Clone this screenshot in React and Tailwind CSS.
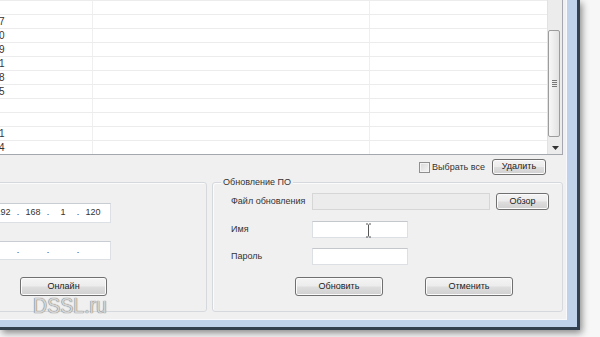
import React from "react";

const BTN =
  "flex items-center justify-center rounded-[3px] border border-[#707070] bg-[linear-gradient(#f4f4f4_0%,#ececec_48%,#dedede_52%,#d0d0d0_100%)] shadow-[inset_0_0_0_1px_#fbfbfb] text-[9px] text-[#222] whitespace-nowrap";

function Btn({ children, className }) {
  return <div className={BTN + " " + className}>{children}</div>;
}

const rows = ["", "7", "0", "9", "1", "8", "5", "", "", "1", "4"];

function IpField({ values, h }) {
  return (
    <div
      className={
        "ml-[9px] w-[131px] flex items-center pl-[10px] bg-white border border-[#dcdfe4] border-t-[#c9ccd2] text-[9px] text-[#333] " +
        h
      }
    >
      {values.map((v, i) => (
        <React.Fragment key={i}>
          <span className="w-[24px] text-center shrink-0">{v}</span>
          {i < 3 && <span className="w-[6px] text-center shrink-0">.</span>}
        </React.Fragment>
      ))}
    </div>
  );
}

export default function App() {
  return (
    <div className="relative w-[600px] h-[337px] overflow-hidden bg-[#f7f7f7] font-['Liberation_Sans',Arial,sans-serif]">
      {/* dialog */}
      <div className="w-[580px] h-[330px] border-r-[3px] border-b-[3px] border-[#34404e] shadow-[2px_3px_7px_rgba(0,0,0,0.45)]">
        <div className="w-[577px] h-[327px] border-r-[10px] border-b-[7px] border-[#bfd2ea] bg-[#bfd2ea]">
          <div className="flex flex-col w-[567px] h-[320px] bg-[#f0f0f0] border-r border-b border-[#f7f9fc]">
            {/* list */}
            <div className="flex w-[563px] h-[155px] bg-white border-r border-b border-[#a4a8ae]">
              <div className="flex flex-col w-[547px] overflow-hidden">
                {rows.map((r, i) => (
                  <div key={i} className="flex h-[14px] shrink-0 border-t border-[#ececec] text-[10px] leading-[13px] text-[#333]">
                    <div className="w-[93px] border-r border-[#efefef] overflow-hidden">
                      <span className="block -ml-[1px]">{r}</span>
                    </div>
                    <div className="w-[277px] border-r border-[#efefef]" />
                    <div className="flex-1" />
                  </div>
                ))}
              </div>
              {/* scrollbar */}
              <div className="flex flex-col w-[15px] h-full bg-[#ececec] border-l border-[#e2e2e2]">
                <div className="h-[30px] shrink-0" />
                <div className="h-[107px] shrink-0 w-[12px] rounded-[2px] border border-[#9c9c9c] bg-[linear-gradient(90deg,#f7f7f7,#e2e2e2)] flex items-center justify-center">
                  <div className="flex flex-col gap-[1px]">
                    <div className="w-[5px] h-[1px] bg-[#777]" />
                    <div className="w-[5px] h-[1px] bg-[#777]" />
                    <div className="w-[5px] h-[1px] bg-[#777]" />
                    <div className="w-[5px] h-[1px] bg-[#777]" />
                  </div>
                </div>
                <div className="flex-1 flex items-center justify-center pt-[4px]">
                  <svg width="7" height="4" viewBox="0 0 7 4">
                    <path d="M0 0 H7 L3.5 4 Z" fill="#333" />
                  </svg>
                </div>
              </div>
            </div>

            {/* toolbar row */}
            <div className="flex justify-end items-start h-[27px] pt-[4px] pr-[20px] gap-[7px] shrink-0">
              <div className="flex items-center gap-[2px] mt-[3px] h-[11px]">
                <div className="w-[11px] h-[11px] border border-[#8e8f8f] bg-[linear-gradient(135deg,#d8d8d8,#f6f6f6)] shadow-[inset_0_0_0_1px_#f4f4f4]" />
                <span className="text-[9px] text-[#333] leading-[11px] whitespace-nowrap">Выбрать все</span>
              </div>
              <Btn className="w-[54px] h-[16px]">Удалить</Btn>
            </div>

            {/* groups */}
            <div className="flex gap-[5px] h-[130px] shrink-0">
              {/* left group */}
              <div className="-ml-[30px] w-[237px] h-full rounded-[3px] border border-[#d5d9de] shadow-[inset_1px_1px_0_#fbfbfb] flex flex-col pt-[20px]">
                <IpField values={["192", "168", "1", "120"]} h="h-[20px]" />
                <div className="mt-[18px]">
                  <IpField values={["", "", "", ""]} h="h-[19px]" />
                </div>
                <Btn className="mt-[17px] ml-[49px] w-[87px] h-[19px]">Онлайн</Btn>
              </div>

              {/* right group */}
              <div className="relative w-[351px] h-full rounded-[3px] border border-[#d5d9de] shadow-[inset_1px_1px_0_#fbfbfb] flex flex-col pt-[10px] pl-[18px]">
                <span className="absolute left-[8px] -top-[7px] px-[2px] bg-[#f0f0f0] text-[9px] leading-[12px] text-[#333] whitespace-nowrap">
                  Обновление ПО
                </span>
                <div className="flex items-center h-[17px]">
                  <span className="w-[81px] text-[9px] text-[#333] whitespace-nowrap">Файл обновления</span>
                  <div className="w-[178px] h-[17px] bg-[#ececec] border border-[#d6d6d6]" />
                  <Btn className="ml-[6px] w-[53px] h-[17px]">Обзор</Btn>
                </div>
                <div className="flex items-center h-[17px] mt-[11px]">
                  <span className="w-[81px] text-[9px] text-[#333]">Имя</span>
                  <div className="w-[96px] h-[17px] bg-white border border-[#dcdfe4] border-t-[#c4c7cc]" />
                </div>
                <div className="flex items-center h-[17px] mt-[10px]">
                  <span className="w-[81px] text-[9px] text-[#333]">Пароль</span>
                  <div className="w-[96px] h-[17px] bg-white border border-[#dcdfe4] border-t-[#c4c7cc]" />
                </div>
                <div className="flex mt-[12px]">
                  <Btn className="ml-[64px] w-[88px] h-[19px]">Обновить</Btn>
                  <Btn className="ml-[42px] w-[88px] h-[19px]">Отменить</Btn>
                </div>
              </div>
            </div>
          </div>
        </div>
      </div>

      {/* text cursor */}
      <svg className="absolute left-[365px] top-[223px]" width="7" height="15" viewBox="0 0 7 15">
        <path d="M1 1 H3 M4 1 H6 M3.5 1.5 V13.5 M1 14 H3 M4 14 H6" stroke="#555" strokeWidth="1" fill="none" />
      </svg>

      {/* watermark */}
      <span className="absolute left-[33px] top-[294px] origin-left scale-x-[0.89] text-[22px] leading-[24px] text-[#d4d4d4] [text-shadow:0_0_1px_#7a7a7a,0_0_1px_#7a7a7a] whitespace-nowrap">
        DSSL.ru
      </span>
    </div>
  );
}
